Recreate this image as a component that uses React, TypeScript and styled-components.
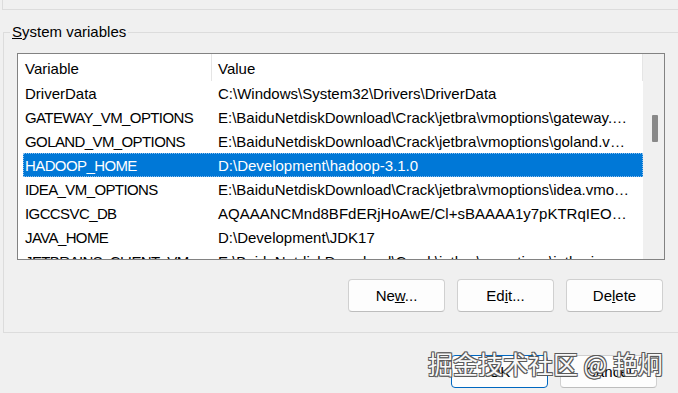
import styled, { createGlobalStyle } from "styled-components";

const GlobalStyle = createGlobalStyle`
  * { box-sizing: border-box; }
  html, body { margin: 0; padding: 0; background: #f0f0f0; }
  body {
    font-family: "Liberation Sans", "Noto Sans", Arial, sans-serif;
    font-size: 15px;
    color: #000;
  }
`;

const Screen = styled.div`
  position: relative;
  width: 678px;
  height: 393px;
  overflow: hidden;
  background: #f0f0f0;
  display: flex;
  flex-direction: column;
`;

const PrevGroup = styled.div`
  flex: none;
  margin-left: 2px;
  width: 700px;
  height: 10px;
  border-left: 1px solid #dcdcdc;
  border-bottom: 1px solid #dcdcdc;
`;

const Group = styled.fieldset`
  flex: none;
  margin: 12px 0 0 3px;
  padding: 0 0 20px 0;
  width: 700px;
  min-inline-size: 0;
  border: 1px solid #dcdcdc;
`;

const Legend = styled.legend`
  margin-left: 6px;
  padding: 0 2px;
  line-height: 20px;
  font-size: 15px;
`;

const GroupBody = styled.div`
  margin: 11px 0 0 13px;
  width: 648px;
`;

const ListBox = styled.div`
  display: flex;
  height: 207px;
  border: 1px solid #828282;
  background: #fff;
`;

const ListContent = styled.div`
  flex: 1;
  min-width: 0;
  overflow: hidden;
  display: flex;
  flex-direction: column;
`;

const Header = styled.div`
  flex: none;
  display: grid;
  grid-template-columns: 189px 1fr;
  height: 27px;
  padding-left: 5px;
`;

const HeaderCell = styled.div<{ $pad: number }>`
  display: flex;
  align-items: center;
  padding: 2px 0 0 ${(p) => p.$pad}px;
  border-right: 1px solid #e5e5e5;
  white-space: nowrap;
`;

const Rows = styled.div`
  padding-left: 5px;
`;

const Row = styled.div<{ $selected?: boolean }>`
  display: grid;
  grid-template-columns: 193px 1fr;
  height: 24px;
  align-items: center;
  background: ${(p) => (p.$selected ? "#0078d7" : "transparent")};
  color: ${(p) => (p.$selected ? "#fff" : "#000")};
  outline: ${(p) => (p.$selected ? "1px dotted #8fc0ec" : "none")};
  outline-offset: -1px;
`;

const Cell = styled.div<{ $right?: number; $tight?: boolean }>`
  padding: 1px ${(p) => p.$right ?? 4}px 0 2px;
  letter-spacing: ${(p) => (p.$tight ? "-0.6px" : "normal")};
  white-space: nowrap;
  overflow: hidden;
  text-overflow: ellipsis;
`;

const ScrollBar = styled.div`
  flex: none;
  width: 21px;
  background: #f0f0f0;
  display: flex;
  flex-direction: column;
  align-items: center;
`;

const Thumb = styled.div`
  margin: 61px 0 0 2px;
  width: 6px;
  height: 27px;
  background: #898989;
  border-radius: 1px;
`;

const ButtonRow = styled.div<{ $top: number; $right: number }>`
  display: flex;
  justify-content: flex-end;
  gap: 12px;
  margin-top: ${(p) => p.$top}px;
  padding-right: ${(p) => p.$right}px;
`;

const Button = styled.button<{ $primary?: boolean }>`
  width: 97px;
  height: 33px;
  padding: 0;
  font-family: inherit;
  font-size: 15px;
  color: #000;
  background: #fdfdfd;
  border: 1px solid ${(p) => (p.$primary ? "#0067c0" : "#d0d0d0")};
  border-bottom-color: ${(p) => (p.$primary ? "#0067c0" : "#bdbdbd")};
  border-radius: 4px;
`;

const Watermark = styled.div`
  position: absolute;
  left: 428px;
  top: 345px;
  font-family: "Noto Sans CJK SC", sans-serif;
  font-size: 25px;
  line-height: 36px;
  white-space: nowrap;
  color: #f8f8f8;
  text-shadow: 1px 1px 0 #5a5a5a, -1px -1px 0 #5a5a5a, 1px -1px 0 #5a5a5a,
    -1px 1px 0 #5a5a5a, 0 1px 0 #5a5a5a, 0 -1px 0 #5a5a5a;
`;

const variables = [
  ["DriverData", "C:\\Windows\\System32\\Drivers\\DriverData"],
  ["GATEWAY_VM_OPTIONS", "E:\\BaiduNetdiskDownload\\Crack\\jetbra\\vmoptions\\gateway.vmoptions"],
  ["GOLAND_VM_OPTIONS", "E:\\BaiduNetdiskDownload\\Crack\\jetbra\\vmoptions\\goland.vmoptions"],
  ["HADOOP_HOME", "D:\\Development\\hadoop-3.1.0"],
  ["IDEA_VM_OPTIONS", "E:\\BaiduNetdiskDownload\\Crack\\jetbra\\vmoptions\\idea.vmoptions"],
  ["IGCCSVC_DB", "AQAAANCMnd8BFdERjHoAwE/Cl+sBAAAA1y7pKTRqIEObmxQwAAAAAAgAAAAAAEGYAAA"],
  ["JAVA_HOME", "D:\\Development\\JDK17"],
  ["JETBRAINS_CLIENT_VM_OPTIONS", "E:\\BaiduNetdiskDownload\\Crack\\jetbra\\vmoptions\\jetbrains_client.vmoptions"],
];

export default function App() {
  return (
    <Screen>
      <GlobalStyle />
      <PrevGroup />
      <Group>
        <Legend>
          <u>S</u>ystem variables
        </Legend>
        <GroupBody>
          <ListBox>
            <ListContent>
              <Header>
                <HeaderCell $pad={2}>Variable</HeaderCell>
                <HeaderCell $pad={6}>Value</HeaderCell>
              </Header>
              <Rows>
                {variables.map(([name, value]) => (
                  <Row key={name} $selected={name === "HADOOP_HOME"}>
                    <Cell $tight={name === name.toUpperCase()}>{name}</Cell>
                    <Cell $right={9}>{value}</Cell>
                  </Row>
                ))}
              </Rows>
            </ListContent>
            <ScrollBar>
              <Thumb />
            </ScrollBar>
          </ListBox>
          <ButtonRow $top={19} $right={2}>
            <Button>
              Ne<u>w</u>...
            </Button>
            <Button>
              Ed<u>i</u>t...
            </Button>
            <Button>
              De<u>l</u>ete
            </Button>
          </ButtonRow>
        </GroupBody>
      </Group>
      <ButtonRow $top={22} $right={21}>
        <Button $primary>OK</Button>
        <Button>Cancel</Button>
      </ButtonRow>
      <Watermark>掘金技术社区 @ 艳炯</Watermark>
    </Screen>
  );
}
